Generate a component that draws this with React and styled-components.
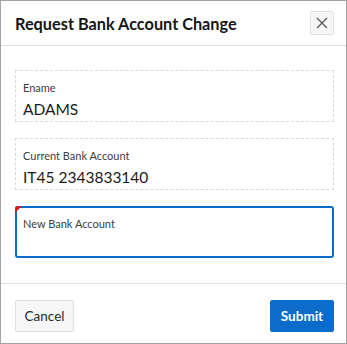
import React from "react";
import styled, { createGlobalStyle } from "styled-components";

const Global = createGlobalStyle`
  html, body { margin: 0; padding: 0; background: #fff; }
  * { box-sizing: border-box; }
  body { font-family: Lato, "Noto Sans", sans-serif; }
`;

const Dialog = styled.div`
  width: 347px;
  height: 344px;
  border: 1px solid #a3a3a3;
  background: #fff;
  display: flex;
  flex-direction: column;
`;

const Header = styled.div`
  height: 45px;
  border-bottom: 1px solid #dedede;
  display: flex;
  align-items: center;
  justify-content: space-between;
  padding: 0 12px 0 14px;
  flex-shrink: 0;
`;

const Title = styled.h1`
  margin: 0;
  font-size: 16.3px;
  font-weight: 700;
  color: #161616;
`;

const CloseButton = styled.button`
  width: 24px;
  height: 24px;
  padding: 0;
  border: 1px solid #e0e0e0;
  border-radius: 2px;
  background: #f6f6f6;
  display: flex;
  align-items: center;
  justify-content: center;
`;

const Body = styled.div`
  flex: 1;
  padding: 24px 12px 0 14px;
  display: flex;
  flex-direction: column;
  gap: 16px;
  border-bottom: 1px solid #e3e3e3;
`;

const Field = styled.div`
  position: relative;
  height: 52px;
  border: ${(p) => (p.$focused ? "2px solid #0b6ccb" : "1px dashed #d9d9d9")};
  border-radius: ${(p) => (p.$focused ? "3px" : "0")};
  padding: ${(p) => (p.$focused ? "8px 6px" : "9px 7px 0")};
  display: flex;
  flex-direction: column;
`;

const Required = styled.span`
  position: absolute;
  left: -2px;
  top: -2px;
  width: 0;
  height: 0;
  border-top: 7px solid #d31c1c;
  border-right: 7px solid transparent;
  border-top-left-radius: 3px;
`;

const Label = styled.label`
  font-size: 11px;
  color: #404040;
  line-height: 15px;
`;

const Value = styled.div`
  font-size: 15.5px;
  color: #1b1b1b;
  line-height: 20px;
  margin-top: 4px;
`;

const Footer = styled.div`
  height: 59px;
  display: flex;
  align-items: flex-start;
  justify-content: space-between;
  padding: 16px 12px 0 14px;
  flex-shrink: 0;
`;

const Button = styled.button`
  height: 32px;
  padding: 0;
  border-radius: 2px;
  font-family: Lato, "Noto Sans", sans-serif;
  font-size: 13.5px;
  cursor: pointer;
  border: 1px solid ${(p) => (p.$primary ? "#0b6ccb" : "#dedede")};
  background: ${(p) => (p.$primary ? "#0b6ccb" : "#f6f6f6")};
  color: ${(p) => (p.$primary ? "#fff" : "#2a2a2a")};
  font-weight: ${(p) => (p.$primary ? 700 : 400)};
  width: ${(p) => (p.$primary ? "64px" : "59px")};
`;

export default function App() {
  return (
    <>
      <Global />
      <Dialog>
        <Header>
          <Title>Request Bank Account Change</Title>
          <CloseButton aria-label="Close">
            <svg width="12" height="12" viewBox="0 0 12 12">
              <path d="M1 1 L11 11 M11 1 L1 11" stroke="#555" strokeWidth="1.2" />
            </svg>
          </CloseButton>
        </Header>
        <Body>
          <Field>
            <Label>Ename</Label>
            <Value>ADAMS</Value>
          </Field>
          <Field>
            <Label>Current Bank Account</Label>
            <Value>IT45 2343833140</Value>
          </Field>
          <Field $focused>
            <Required />
            <Label>New Bank Account</Label>
          </Field>
        </Body>
        <Footer>
          <Button>Cancel</Button>
          <Button $primary>Submit</Button>
        </Footer>
      </Dialog>
    </>
  );
}
